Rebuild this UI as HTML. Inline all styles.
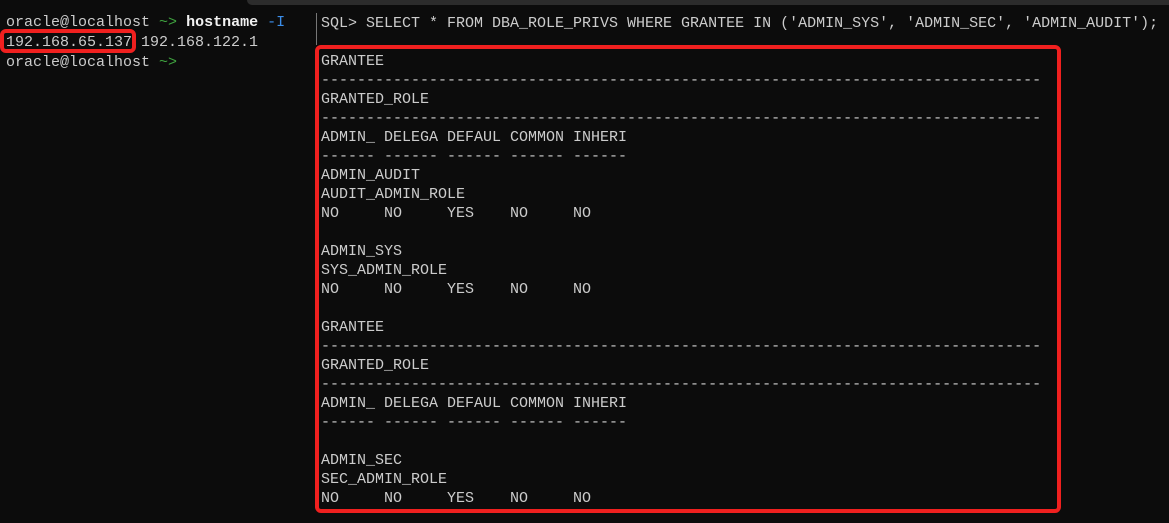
<!DOCTYPE html>
<html><head><style>
body{margin:0;width:1169px;height:523px;background:#0c0c0c;overflow:hidden;position:relative;font-family:"Liberation Mono",monospace;font-size:15px;color:#cccccc}
.top{position:absolute;left:247px;top:0;width:922px;height:5px;background:#2c2c2c;border-bottom-left-radius:5px}
.vl{position:absolute;left:316px;top:13px;width:1px;height:32px;background:#777}
.l{position:absolute;left:6px;white-space:pre;line-height:20px}
.r{position:absolute;left:321px;white-space:pre;line-height:19px}
.g{color:#3fa33f}.b{color:#3b8eea}.w{color:#f2f2f2;font-weight:bold}
.box{position:absolute;border:4px solid #f0201f;border-radius:6px;box-sizing:border-box}
</style></head><body>
<div class="top"></div>
<div class="vl"></div>
<div class="l" style="top:13px">oracle@localhost <span class="g">~&gt;</span> <span class="w">hostname</span> <span class="b">-I</span>
192.168.65.137 192.168.122.1
oracle@localhost <span class="g">~&gt;</span></div>
<div class="box" style="left:0;top:29px;width:136px;height:24px"></div>
<div class="r" style="top:14px">SQL&gt; SELECT * FROM DBA_ROLE_PRIVS WHERE GRANTEE IN ('ADMIN_SYS', 'ADMIN_SEC', 'ADMIN_AUDIT');

GRANTEE
--------------------------------------------------------------------------------
GRANTED_ROLE
--------------------------------------------------------------------------------
ADMIN_ DELEGA DEFAUL COMMON INHERI
------ ------ ------ ------ ------
ADMIN_AUDIT
AUDIT_ADMIN_ROLE
NO     NO     YES    NO     NO

ADMIN_SYS
SYS_ADMIN_ROLE
NO     NO     YES    NO     NO

GRANTEE
--------------------------------------------------------------------------------
GRANTED_ROLE
--------------------------------------------------------------------------------
ADMIN_ DELEGA DEFAUL COMMON INHERI
------ ------ ------ ------ ------

ADMIN_SEC
SEC_ADMIN_ROLE
NO     NO     YES    NO     NO</div>
<div class="box" style="left:315px;top:45px;width:746px;height:468px"></div>
</body></html>
